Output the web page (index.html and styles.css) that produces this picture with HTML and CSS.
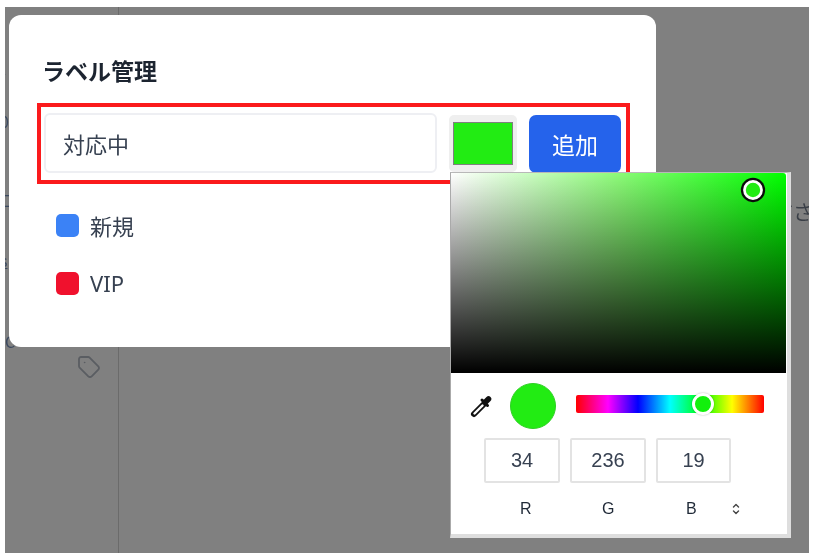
FILE: index.html
```html
<!DOCTYPE html>
<html lang="ja">
<head>
<meta charset="utf-8">
<title>ラベル管理</title>
<link rel="stylesheet" href="styles.css">
</head>
<body>
<div class="screen">
  <div class="backdrop-app">
    <aside class="rail">
      <svg class="tag-icon" width="24" height="24" viewBox="0 0 24 24" fill="none" stroke="#5a5d62" stroke-width="1.8" stroke-linecap="round" stroke-linejoin="round"><path d="M12.6 2.6A2 2 0 0 0 11.2 2H4a2 2 0 0 0-2 2v7.2a2 2 0 0 0 .6 1.4l8.7 8.7a2.4 2.4 0 0 0 3.4 0l6.6-6.6a2.4 2.4 0 0 0 0-3.4z"/><circle cx="7.5" cy="7.5" r=".3" fill="#5a5d62" stroke-width="1"/></svg>
    </aside>
    <span class="clip-a">、</span>
    <span class="clip-b">0</span>
    <span class="clip-c">口</span>
    <span class="clip-d">s</span>
    <span class="clip-e">C</span>
    <span class="behind-text">ださ</span>
  </div>

  <section class="modal">
    <h2 class="title">ラベル管理</h2>
    <div class="add-row">
      <div class="name-input">対応中</div>
      <div class="swatch-wrap"><div class="swatch"></div></div>
      <button class="add-btn">追加</button>
    </div>
    <ul class="labels">
      <li class="label"><span class="dot dot-blue"></span>新規</li>
      <li class="label"><span class="dot dot-red"></span>VIP</li>
    </ul>
  </section>

  <div class="highlight"></div>

  <div class="picker">
    <div class="sat">
      <span class="sat-thumb"></span>
    </div>
    <div class="controls">
      <svg class="dropper" width="28" height="28" viewBox="0 0 28 28" fill="none" stroke-linecap="round"><path d="M7 22 16 13" stroke="#111" stroke-width="6"/><path d="M7.5 21.5 15.5 13.5" stroke="#fff" stroke-width="2.4"/><path d="M19 9.5 21.5 7" stroke="#111" stroke-width="5.6"/><path d="M15 8 20.5 13.5" stroke="#111" stroke-width="3"/></svg>
      <span class="preview"></span>
      <div class="hue"><span class="hue-thumb"></span></div>
    </div>
    <div class="fields">
      <div class="field">34</div>
      <div class="field">236</div>
      <div class="field field-b">19</div>
    </div>
    <div class="field-labels">
      <span class="fl fl-r">R</span>
      <span class="fl fl-g">G</span>
      <span class="fl fl-b">B</span>
      <svg class="updown" width="10" height="14" viewBox="0 0 10 14" fill="none" stroke="#444" stroke-width="1.4" stroke-linecap="round" stroke-linejoin="round"><path d="M2.5 5 5 2.5 7.5 5M2.5 9 5 11.5 7.5 9"/></svg>
    </div>
  </div>
</div>
</body>
</html>
```

FILE: styles.css
```css
* { box-sizing: border-box; }
html, body { margin: 0; height: 100%; background: #fff; overflow: hidden; }
body { font-family: "Noto Sans CJK JP", "Noto Sans", "Liberation Sans", sans-serif; color: #1f2937; }

.screen { position: relative; width: 804px; height: 546px; margin: 7px 0 0 5px; background: #808080; overflow: hidden; filter: blur(.45px); }

.backdrop-app { position: absolute; inset: 0; }
.rail { width: 114px; height: 100%; border-right: 1px solid #6b6b6b; position: relative; }
.tag-icon { position: absolute; left: 72px; top: 348px; }
.clip-a, .clip-b, .clip-c, .clip-d, .clip-e { position: absolute; left: -5px; font-size: 16px; line-height: 20px; color: #3c4a60; }
.clip-a { top: 50px; }
.clip-b { top: 104px; }
.clip-c { top: 183px; }
.clip-d { top: 243px; text-decoration: underline; }
.clip-e { top: 324px; left: 0; }
.behind-text { position: absolute; left: 768px; top: 193px; font-size: 20px; line-height: 24px; color: #3a3f47; white-space: nowrap; }

.modal { position: absolute; left: 4px; top: 8px; width: 647px; height: 332px; background: #fff; border-radius: 12px; padding: 40px 33px 0; }
.title { margin: 0; font-size: 23px; font-weight: 700; line-height: 30px; color: #1c2430; }
.add-row { display: flex; margin-top: 28px; margin-left: 2px; height: 60px; }
.name-input { width: 393px; height: 60px; border: 2px solid #eeeff3; border-radius: 6px; padding: 0 17px; font-size: 22px; line-height: 56px; color: #374151; }
.swatch-wrap { width: 68px; height: 57px; margin: 2px 0 0 12px; background: #efefef; border-radius: 5px; padding: 7px 4px; }
.swatch { width: 60px; height: 43px; background: #22ec13; border: 1.5px solid #808080; }
.add-btn { width: 92px; height: 58px; margin: 2px 0 0 12px; border: 0; border-radius: 7px; background: #2563eb; color: #fff; font: inherit; font-size: 23px; padding: 0; }
.labels { list-style: none; margin: 23px 0 0; padding: 0 0 0 14px; }
.label { display: flex; align-items: center; height: 58px; font-size: 22px; color: #374151; }
.dot { width: 23px; height: 23px; border-radius: 5px; margin-right: 11px; }
.dot-blue { background: #3b82f6; }
.dot-red { background: #f0112d; }
.label:last-child { font-family: "Noto Sans", sans-serif; }

.highlight { position: absolute; left: 32px; top: 96px; width: 593px; height: 81px; border: 4px solid #fb1a1c; pointer-events: none; }

.picker { position: absolute; left: 445px; top: 165px; width: 341px; height: 366px; background: #fff; border-top: 1px solid #b8b8b8; border-left: 1px solid #aaa; border-right: 4px solid #dedede; border-bottom: 4px solid #dedede; }
.sat { position: relative; height: 200px; width: 335px; border-radius: 0 3px 0 0; background: linear-gradient(to top, #000, rgba(0,0,0,0)), linear-gradient(to right, #fff, #8cfb78 50%, #0f0); }
.sat-thumb { position: absolute; left: 291px; top: 6px; width: 22px; height: 22px; border-radius: 50%; background: #22ec13; border: 3px solid #fff; box-shadow: 0 0 0 2.5px #0b0b0b; transform: scale(.9); }

.controls { position: relative; display: flex; align-items: center; height: 65px; }
.dropper { margin-left: 16px; margin-top: 1px; }
.preview { width: 46px; height: 46px; border-radius: 50%; background: #22ec13; margin: 1px 0 0 15px; border: 1px solid #2ed024; }
.hue { position: relative; width: 188px; height: 18px; margin-left: 20px; margin-top: -3px; border-radius: 2px; background: linear-gradient(to right, #f00 0%, #f0f 17%, #00f 33%, #0ff 50%, #0f0 67%, #ff0 83%, #f00 100%); }
.hue-thumb { position: absolute; left: 116px; top: -2px; width: 22px; height: 22px; border-radius: 50%; background: #12f00c; border: 3px solid #fff; box-shadow: 0 0 2px rgba(0,0,0,.3); }

.fields { display: flex; margin-left: 33px; }
.field { width: 76px; height: 45px; border: 2px solid #e3e3e3; border-radius: 2px; margin-right: 10px; text-align: center; font-family: "Liberation Sans", sans-serif; font-size: 20px; line-height: 41px; color: #374151; }
.field-b { width: 75px; }

.field-labels { position: relative; height: 20px; margin-top: 16px; font-family: "Liberation Sans", sans-serif; font-size: 16px; line-height: 20px; color: #1f2937; }
.fl { position: absolute; top: 0; }
.fl-r { left: 69px; }
.fl-g { left: 151px; }
.fl-b { left: 235px; }
.updown { position: absolute; left: 280px; top: 3px; }
```
